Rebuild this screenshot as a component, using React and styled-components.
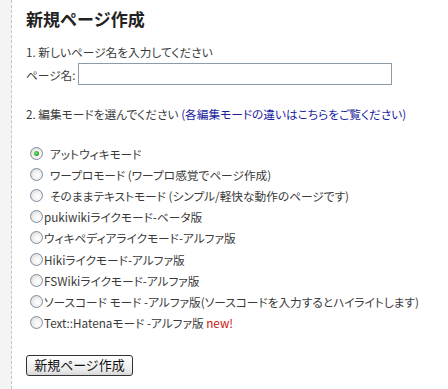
import styled, { createGlobalStyle } from 'styled-components';

const GlobalStyle = createGlobalStyle`
  html, body { margin: 0; padding: 0; background: #fff; }
  body {
    font-family: "Noto Sans CJK JP", "Liberation Sans", sans-serif;
    color: #3a3a3a;
  }
`;

const Page = styled.div`
  display: flex;
  min-height: 389px;
`;

const Gutter = styled.div`
  width: 11px;
  flex: none;
  background: #f4f4f4;
  border-right: 1px dashed #c4c4c4;
`;

const Content = styled.div`
  padding: 8px 0 0 14px;
  flex: 1;
  font-size: 11.7px;
  font-feature-settings: "palt";
`;

const Title = styled.h2`
  margin: 0;
  font-size: 17px;
  line-height: 21px;
  font-weight: bold;
  color: #222;
  font-feature-settings: normal;
`;

const Step = styled.p`
  margin: ${p => p.top}px 0 0;
  line-height: 18px;
`;

const Link = styled.a`
  color: #1c1ca0;
  text-decoration: none;
`;

const NameRow = styled.div`
  display: flex;
  align-items: center;
  margin-top: 2px;
`;

const NameInput = styled.input`
  width: 308px;
  height: 18px;
  margin: 0 0 0 2px;
  padding: 1px 2px;
  border: 1px solid #8c9cab;
  font: inherit;
`;

const ModeList = styled.div`
  display: flex;
  flex-direction: column;
  margin-top: 20px;
`;

const ModeRow = styled.label`
  display: flex;
  align-items: center;
  height: 21.1px;
  white-space: nowrap;
`;

const Radio = styled.span`
  box-sizing: border-box;
  width: 13px;
  height: 13px;
  margin: 0 1px 0 4px;
  border-radius: 50%;
  border: 1px solid #7d8e9e;
  background: radial-gradient(circle at 60% 60%, #ffffff 0%, #f0f0f0 45%, #cfcfcf 100%);
  display: flex;
  align-items: center;
  justify-content: center;
  flex: none;

  &::after {
    content: "";
    display: ${p => (p.checked ? 'block' : 'none')};
    width: 5px;
    height: 5px;
    border-radius: 50%;
    background: radial-gradient(circle at 40% 40%, #7fe07f 0%, #2fa82f 60%, #1d7d1d 100%);
  }
`;

const ModeText = styled.span`
  padding-left: ${p => (p.spaced ? 6 : 0)}px;
`;

const New = styled.span`
  color: #cc1111;
`;

const Submit = styled.button`
  margin-top: 22px;
  width: 107px;
  height: 21px;
  padding: 0;
  border: 1px solid #2e3338;
  border-radius: 3px;
  background: linear-gradient(#ffffff, #ececec 70%, #d8d8d8);
  font-family: "Noto Sans CJK JP", sans-serif;
  font-size: 13px;
  color: #111;
  line-height: 18px;
`;

const modes = [
  { text: 'アットウィキモード', spaced: true, checked: true },
  { text: 'ワープロモード (ワープロ感覚でページ作成)', spaced: true },
  { text: 'そのままテキストモード (シンプル/軽快な動作のページです)', spaced: true },
  { text: 'pukiwikiライクモード-ベータ版' },
  { text: 'ウィキペディアライクモード-アルファ版' },
  { text: 'Hikiライクモード-アルファ版' },
  { text: 'FSWikiライクモード-アルファ版' },
  { text: 'ソースコード モード -アルファ版(ソースコードを入力するとハイライトします)' },
  { text: 'Text::Hatenaモード -アルファ版', isNew: true },
];

export default function App() {
  return (
    <Page>
      <GlobalStyle />
      <Gutter />
      <Content>
        <Title>新規ページ作成</Title>
        <Step top={14}>1. 新しいページ名を入力してください</Step>
        <NameRow>
          ページ名:
          <NameInput type="text" />
        </NameRow>
        <Step top={20}>
          2. 編集モードを選んでください <Link href="#">(各編集モードの違いはこちらをご覧ください)</Link>
        </Step>
        <ModeList>
          {modes.map(m => (
            <ModeRow key={m.text}>
              <Radio checked={m.checked} />
              <ModeText spaced={m.spaced}>
                {m.text}
                {m.isNew && <> <New>new!</New></>}
              </ModeText>
            </ModeRow>
          ))}
        </ModeList>
        <Submit>新規ページ作成</Submit>
      </Content>
    </Page>
  );
}
